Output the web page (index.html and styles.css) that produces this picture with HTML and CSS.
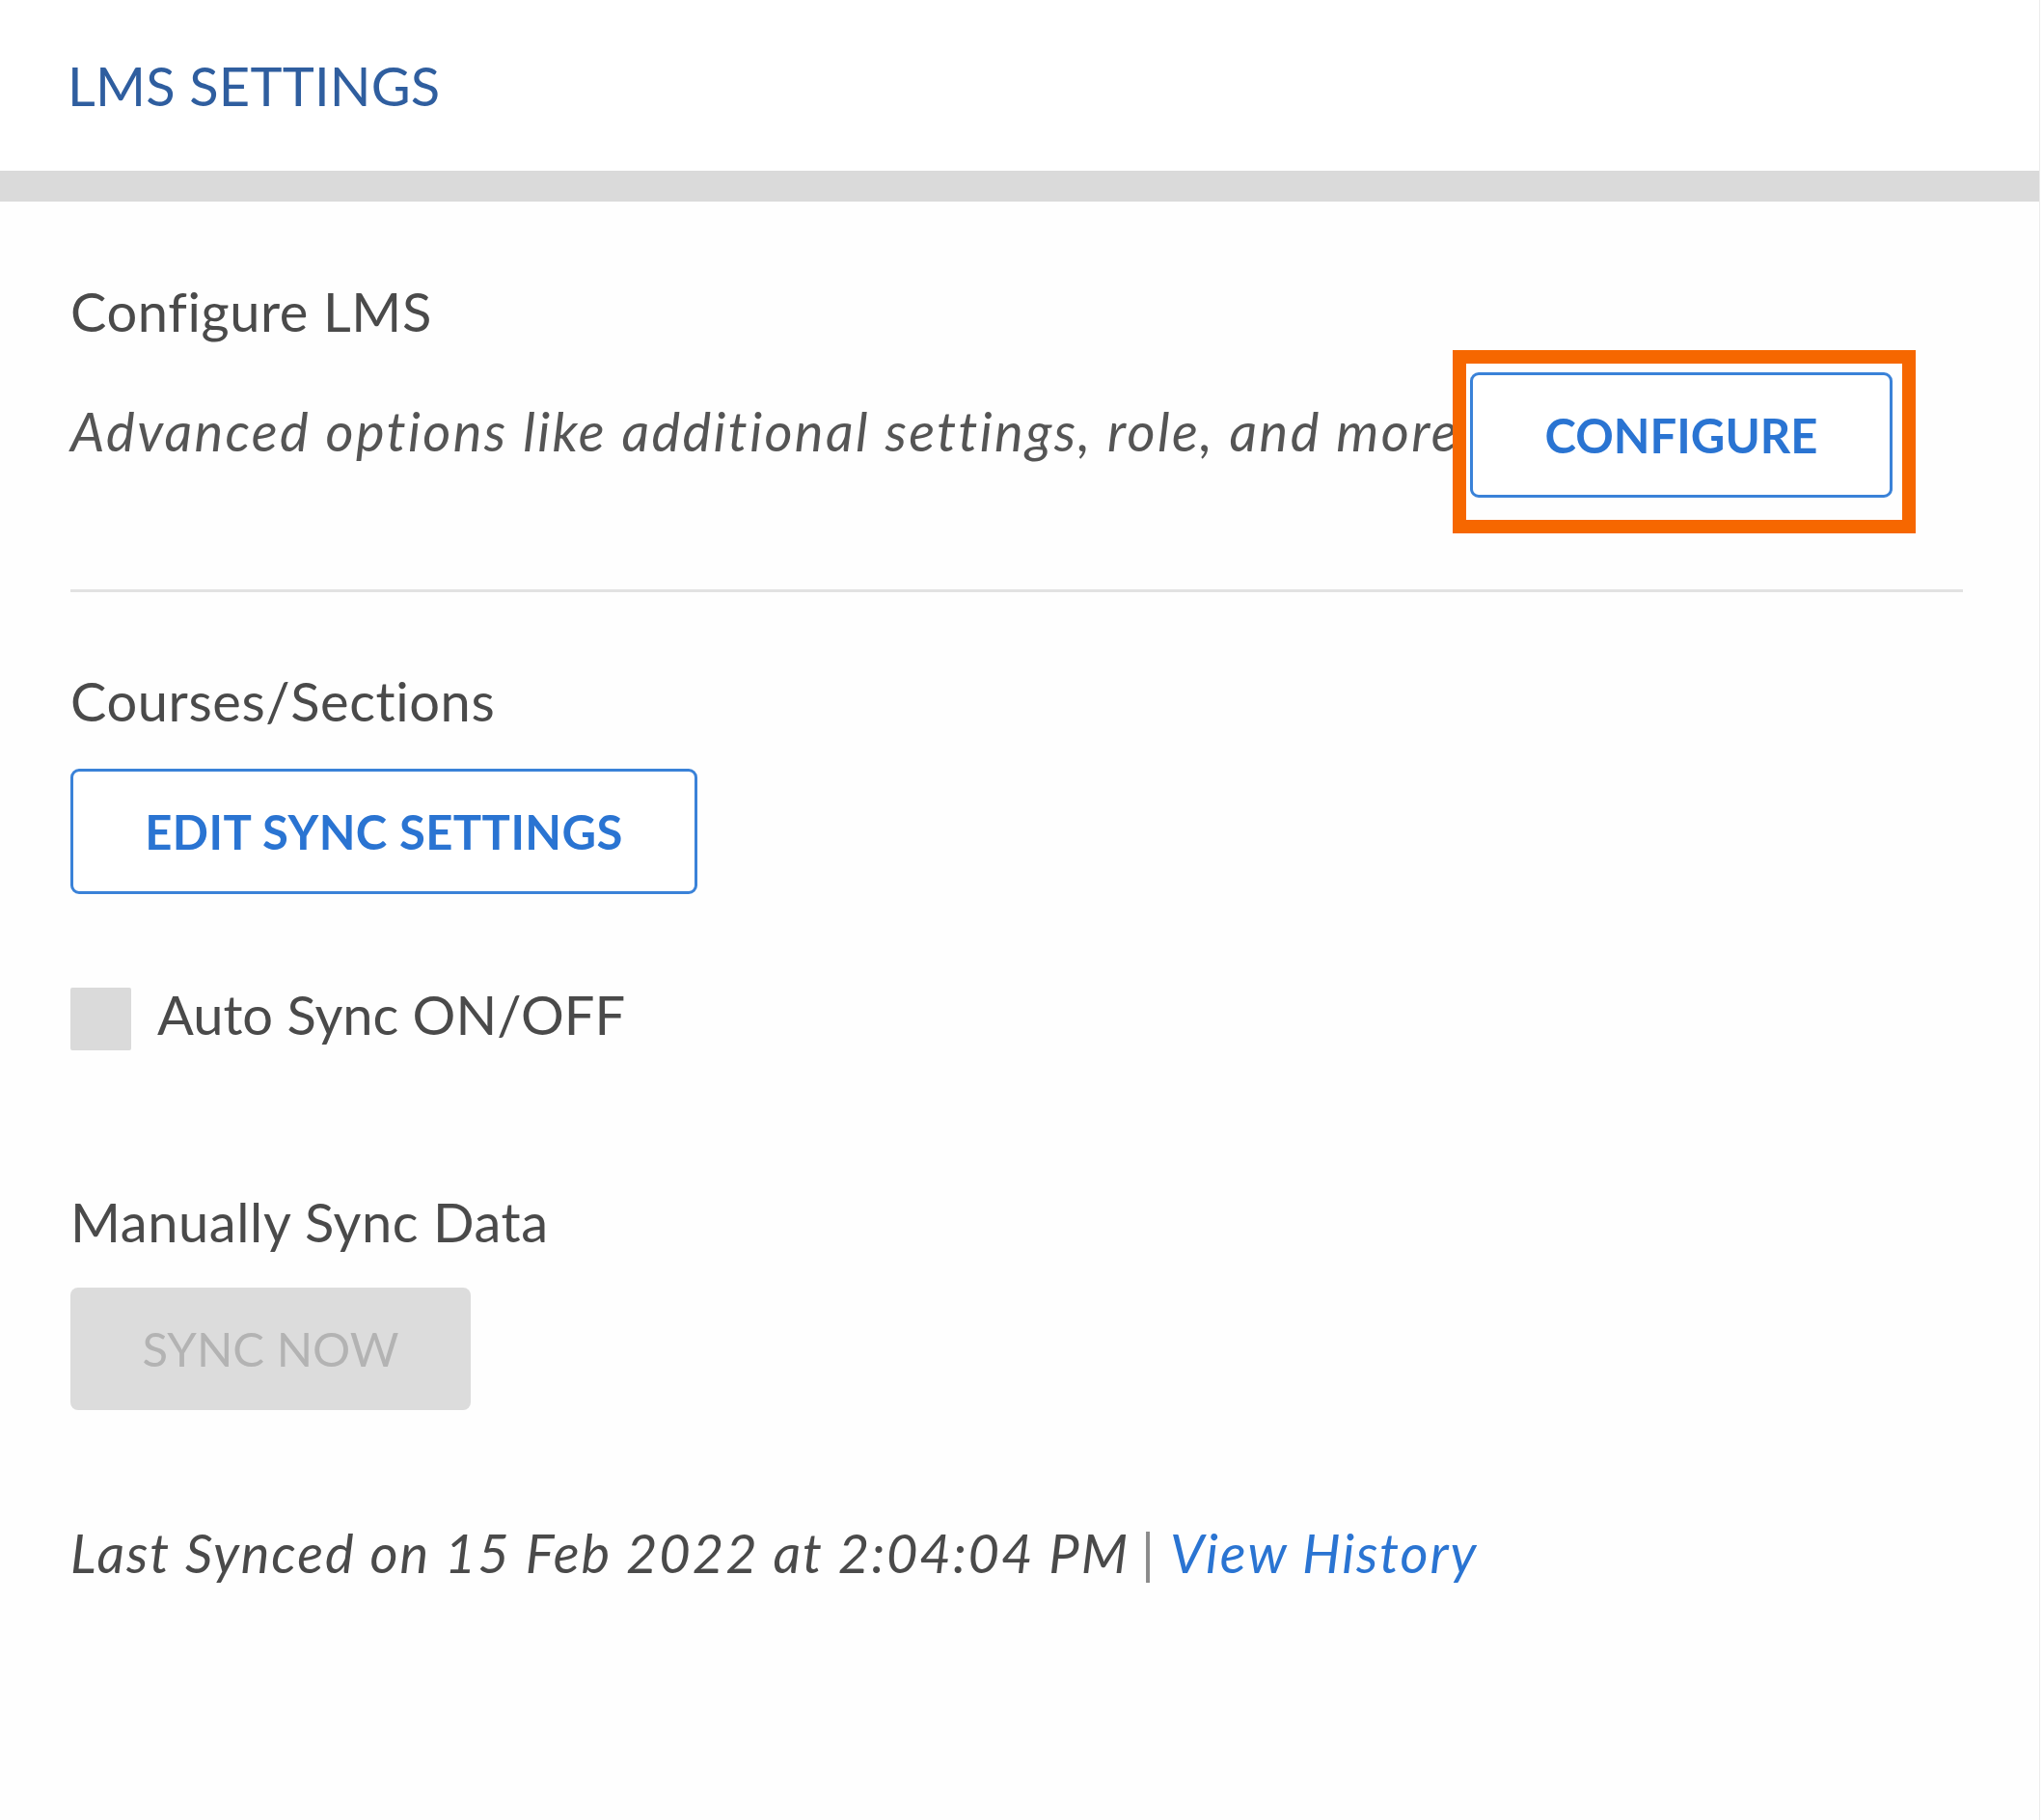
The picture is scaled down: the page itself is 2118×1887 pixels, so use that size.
FILE: index.html
```html
<!DOCTYPE html>
<html lang="en">
<head>
<meta charset="utf-8">
<title>LMS Settings</title>
<link rel="stylesheet" href="styles.css">
</head>
<body>
<div class="panel">
  <header class="panel-header">
    <h1 class="panel-title">LMS SETTINGS</h1>
  </header>
  <div class="panel-band"></div>
  <main class="panel-body">
    <section class="group group-configure">
      <h2 class="label">Configure LMS</h2>
      <div class="configure-row">
        <p class="hint">Advanced options like additional settings, role, and more</p>
        <span class="highlight-wrap">
          <button class="btn btn-outline btn-configure" type="button">CONFIGURE</button>
          <span class="highlight" aria-hidden="true"></span>
        </span>
      </div>
    </section>
    <hr class="divider">
    <section class="group group-courses">
      <h2 class="label">Courses/Sections</h2>
      <button class="btn btn-outline btn-edit" type="button">EDIT SYNC SETTINGS</button>
      <label class="toggle-row">
        <span class="checkbox"></span>
        <span class="toggle-text">Auto Sync ON/OFF</span>
      </label>
    </section>
    <section class="group group-manual">
      <h2 class="label">Manually Sync Data</h2>
      <button class="btn btn-disabled" type="button" disabled>SYNC NOW</button>
      <p class="last-sync">Last Synced on 15 Feb 2022 at 2:04:04 PM<span class="sep">|</span><a class="history-link" href="#">View History</a></p>
    </section>
  </main>
</div>
</body>
</html>
```
FILE: styles.css
```css
* { box-sizing: border-box; }

html, body {
  margin: 0;
  padding: 0;
  background: #ffffff;
}

body {
  font-family: "Lato", "Liberation Sans", sans-serif;
  color: #4a4a4a;
  width: 2118px;
  min-height: 1887px;
}

.panel {
  width: 2115px;
  min-height: 1887px;
  border-right: 1px solid #ececec;
  background: #fefefe;
}

.panel-header {
  height: 177px;
  padding: 55px 0 0 70px;
  background: #ffffff;
}

.panel-title {
  margin: 0;
  font-size: 56px;
  line-height: 67px;
  font-weight: 400;
  color: #2f5e9f;
  letter-spacing: 0.2px;
}

.panel-band {
  height: 32px;
  background: #dadada;
}

.panel-body {
  padding: 80px 79px 0 73px;
}

.label {
  margin: 0;
  font-size: 56px;
  line-height: 67px;
  font-weight: 400;
  color: #4a4a4a;
  letter-spacing: 0.6px;
}

.configure-row {
  display: flex;
  align-items: flex-start;
  margin-top: 30px;
}

.hint {
  flex: 0 0 1451px;
  margin: 27px 0 0;
  white-space: nowrap;
  font-size: 56px;
  line-height: 67px;
  font-style: italic;
  color: #555555;
  letter-spacing: 2.4px;
}

.highlight-wrap {
  position: relative;
  display: block;
}

.highlight {
  position: absolute;
  left: -18px;
  top: -23px;
  right: -24px;
  bottom: -37px;
  border: 14px solid #f66700;
  pointer-events: none;
}

.btn {
  display: flex;
  align-items: center;
  justify-content: center;
  height: 130px;
  padding: 0;
  margin: 0;
  font-family: "Lato", "Liberation Sans", sans-serif;
  font-size: 49px;
  line-height: 1;
  border-radius: 9px;
  cursor: pointer;
}

.btn-outline {
  background: #ffffff;
  border: 3px solid #3a82d8;
  color: #2a74d2;
  font-weight: 700;
}

.btn-configure {
  width: 438px;
}

.divider {
  margin: 95px 0 0;
  border: 0;
  height: 3px;
  background: #e2e2e2;
}

.group-courses {
  padding-top: 79px;
}

.btn-edit {
  width: 650px;
  margin-top: 37px;
  letter-spacing: 0.4px;
}

.toggle-row {
  display: flex;
  align-items: center;
  margin-top: 97px;
  gap: 27px;
}

.checkbox {
  display: block;
  width: 63px;
  height: 65px;
  background: #dadada;
  border-radius: 2px;
}

.toggle-text {
  font-size: 56px;
  line-height: 67px;
  color: #4a4a4a;
  margin-top: -10px;
}

.group-manual {
  padding-top: 144px;
}

.btn-disabled {
  width: 415px;
  height: 127px;
  margin-top: 35px;
  border: 0;
  background: #dcdcdc;
  color: #b3b3b3;
  font-weight: 400;
  border-radius: 8px;
  cursor: default;
}

.last-sync {
  margin: 114px 0 0;
  font-size: 56px;
  line-height: 67px;
  font-style: italic;
  color: #4a4a4a;
  letter-spacing: 1.9px;
}

.sep {
  color: #8a8a8a;
  font-style: normal;
  margin: 0 16px 0 12px;
  letter-spacing: 0;
}

.history-link {
  color: #2a74d2;
  text-decoration: none;
}
```
